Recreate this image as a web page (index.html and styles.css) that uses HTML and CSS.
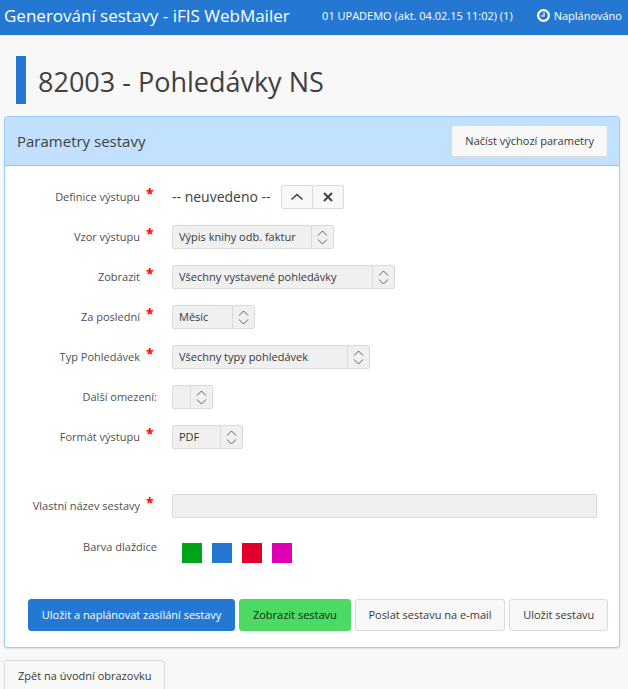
FILE: index.html
```html
<!DOCTYPE html>
<html lang="cs">
  <head>
    <meta charset="UTF-8" />
    <meta name="viewport" content="width=device-width, initial-scale=1.0" />
    <title>Generování sestavy - iFIS WebMailer</title>
    <link rel="stylesheet" href="styles.css">
  </head>
  <body>
    <svg class="icon-defs" aria-hidden="true">
      <symbol id="updown" viewBox="0 0 22 22">
        <path d="M6 9.5 L10.5 5 L15 9.5 M6 13.5 L10.5 18 L15 13.5" fill="none" stroke="currentColor" />
      </symbol>
    </svg>

    <header class="navbar">
      <a href="#" class="brand">Generování sestavy - iFIS WebMailer</a>
      <nav class="nav-links">
        <a href="#">01 UPADEMO (akt. 04.02.15 11:02) (1)</a>
        <a href="#" class="planned">
          <svg class="clock" viewBox="0 0 12 12" aria-hidden="true">
            <circle cx="6" cy="6" r="5" fill="none" stroke="currentColor" stroke-width="2" />
            <path d="M6.5 3 V6.5 H3.5" fill="none" stroke="currentColor" />
          </svg>
          Naplánováno
        </a>
      </nav>
    </header>

    <main>
      <h1 class="page-title">82003 - Pohledávky NS</h1>

      <form class="panel">
        <div class="panel-heading">
          <h2>Parametry sestavy</h2>
          <button type="button" class="btn">Načíst výchozí parametry</button>
        </div>

        <div class="panel-body">
          <div class="row">
            <span class="label required">Definice výstupu</span>
            <div class="field">
              <span class="value">-- neuvedeno --</span>
              <div class="btn-group">
                <button type="button" class="btn-icon" aria-label="Vybrat">
                  <svg viewBox="0 0 14 14"><path d="M1.5 9.5 L7 4.5 L12.5 9.5" fill="none" stroke="currentColor" stroke-width="1.6" /></svg>
                </button>
                <button type="button" class="btn-icon" aria-label="Zrušit">
                  <svg viewBox="0 0 14 14"><path d="M3 3 L11 11 M11 3 L3 11" fill="none" stroke="currentColor" stroke-width="2" /></svg>
                </button>
              </div>
            </div>
          </div>

          <div class="row">
            <label class="label required" for="vzor">Vzor výstupu</label>
            <div class="select select-md">
              <select id="vzor"><option>Výpis knihy odb. faktur</option></select>
              <svg aria-hidden="true"><use href="#updown" /></svg>
            </div>
          </div>

          <div class="row">
            <label class="label required" for="zobrazit">Zobrazit</label>
            <div class="select select-xl">
              <select id="zobrazit"><option>Všechny vystavené pohledávky</option></select>
              <svg aria-hidden="true"><use href="#updown" /></svg>
            </div>
          </div>

          <div class="row">
            <label class="label required" for="obdobi">Za poslední</label>
            <div class="select select-sm">
              <select id="obdobi"><option>Měsíc</option></select>
              <svg aria-hidden="true"><use href="#updown" /></svg>
            </div>
          </div>

          <div class="row">
            <label class="label required" for="typ">Typ Pohledávek</label>
            <div class="select select-lg">
              <select id="typ"><option>Všechny typy pohledávek</option></select>
              <svg aria-hidden="true"><use href="#updown" /></svg>
            </div>
          </div>

          <div class="row">
            <label class="label" for="omezeni">Další omezení:</label>
            <div class="select select-empty">
              <select id="omezeni"><option></option></select>
              <svg aria-hidden="true"><use href="#updown" /></svg>
            </div>
          </div>

          <div class="row">
            <label class="label required" for="format">Formát výstupu</label>
            <div class="select select-xs">
              <select id="format"><option>PDF</option></select>
              <svg aria-hidden="true"><use href="#updown" /></svg>
            </div>
          </div>

          <div class="row row-name">
            <label class="label required" for="nazev">Vlastní název sestavy</label>
            <input type="text" id="nazev" class="text-input">
          </div>

          <div class="row row-color">
            <span class="label">Barva dlaždice</span>
            <div class="swatches">
              <button type="button" class="swatch green" aria-label="Zelená"></button>
              <button type="button" class="swatch blue" aria-label="Modrá"></button>
              <button type="button" class="swatch red" aria-label="Červená"></button>
              <button type="button" class="swatch magenta" aria-label="Purpurová"></button>
            </div>
          </div>
        </div>

        <div class="panel-footer">
          <button type="button" class="btn btn-primary">Uložit a naplánovat zasílání sestavy</button>
          <button type="button" class="btn btn-success">Zobrazit sestavu</button>
          <button type="button" class="btn">Poslat sestavu na e-mail</button>
          <button type="button" class="btn">Uložit sestavu</button>
        </div>
      </form>

      <button type="button" class="btn">Zpět na úvodní obrazovku</button>
    </main>
  </body>
</html>
```
FILE: styles.css
```css
* {
  margin: 0;
  padding: 0;
  box-sizing: border-box;
}

body {
  background-color: #f8f8f8;
  color: #404040;
  font-family: "Segoe UI", "Open Sans", sans-serif;
  font-size: 11px;
  line-height: 16px;
}

button,
input,
select {
  font: inherit;
  color: inherit;
}

.icon-defs {
  display: none;
}

/* top bar */
.navbar {
  display: flex;
  justify-content: space-between;
  align-items: center;
  height: 35px;
  padding: 0 6px 4px 4px;
  background-color: #2578d2;
  white-space: nowrap;
}

.navbar a {
  color: #fff;
  text-decoration: none;
}

.brand {
  font-size: 17px;
  line-height: 24px;
}

.nav-links {
  display: flex;
  gap: 24px;
}

.planned {
  display: flex;
  align-items: center;
  gap: 4px;
}

.clock {
  width: 13px;
  height: 13px;
}

main {
  padding: 21px 8px 0 4px;
}

.page-title {
  margin: 0 0 12px 12px;
  padding: 4px 0 0 12px;
  border-left: 10px solid #2578d2;
  font-size: 27px;
  font-weight: 400;
  line-height: 44px;
}

/* buttons */
.btn {
  height: 32px;
  padding: 0 13px;
  border: 1px solid #dadada;
  border-radius: 3px;
  background-color: #f8f8f8;
  color: #383838;
  white-space: nowrap;
}

.btn-primary {
  border-color: #2578d2;
  background-color: #2578d2;
  color: #fff;
}

.btn-success {
  border-color: #4cd964;
  background-color: #4cd964;
  color: #0f2c14;
}

/* panel */
.panel {
  margin-bottom: 12px;
  border: 1px solid #9bcbff;
  border-radius: 3px;
  background-color: #fff;
  box-shadow: 0 1px 2px rgba(0, 0, 0, 0.1);
}

.panel-heading {
  display: flex;
  justify-content: space-between;
  align-items: center;
  height: 49px;
  padding: 0 11px 0 12px;
  border-bottom: 1px solid #8fc4fc;
  background-color: #c2e0ff;
}

.panel-heading h2 {
  font-size: 15px;
  font-weight: 400;
  line-height: 20px;
}

.panel-body {
  display: grid;
  gap: 16px;
  padding: 19px 22px 36px 0;
}

.row {
  display: grid;
  grid-template-columns: 152px 1fr;
  column-gap: 15px;
  align-items: center;
  min-height: 24px;
}

.row-name {
  margin-top: 29px;
}

.row-color {
  align-items: start;
  margin-top: 5px;
}

.label {
  display: flex;
  justify-content: flex-end;
  color: #505050;
  white-space: nowrap;
}

.required::after {
  content: "*";
  width: 11px;
  padding-left: 6px;
  color: #f00;
  font-size: 14px;
  font-weight: 700;
  line-height: 10px;
}

.field {
  display: flex;
  align-items: center;
  gap: 10px;
}

.value {
  font-size: 14px;
}

.btn-group {
  display: flex;
}

.btn-icon {
  display: flex;
  justify-content: center;
  align-items: center;
  width: 32px;
  height: 24px;
  border: 1px solid #dadada;
  border-radius: 2px;
  background-color: #f8f8f8;
}

.btn-icon + .btn-icon {
  margin-left: -1px;
}

.btn-icon svg {
  width: 14px;
  height: 14px;
}

/* the select and its arrow box share one grid cell */
.select {
  display: grid;
  grid-template-columns: 1fr 23px;
  align-items: center;
  height: 24px;
}

.select select {
  grid-area: 1 / 1 / 2 / 3;
  height: 24px;
  appearance: none;
  padding: 0 24px 0 6px;
  border: 1px solid #dadada;
  border-radius: 2px;
  background-color: #f0f0f0;
  color: #383838;
}

.select svg {
  grid-area: 1 / 2;
  width: 23px;
  height: 22px;
  border-left: 1px solid #dadada;
  color: #606060;
  pointer-events: none;
}

.select-empty {
  width: 41px;
}

.select-xs {
  width: 71px;
}

.select-sm {
  width: 83px;
}

.select-md {
  width: 162px;
}

.select-lg {
  width: 198px;
}

.select-xl {
  width: 223px;
}

.text-input {
  width: 100%;
  height: 24px;
  padding: 0 6px;
  border: 1px solid #dadada;
  border-radius: 2px;
  background-color: #f0f0f0;
}

.swatches {
  display: flex;
  gap: 10px;
  padding: 4px 0 0 10px;
}

.swatch {
  width: 20px;
  height: 20px;
  border: none;
}

.green {
  background-color: #00a31a;
}

.blue {
  background-color: #2578d2;
}

.red {
  background-color: #e0002d;
}

.magenta {
  background-color: #e000b4;
}

.panel-footer {
  display: flex;
  flex-wrap: wrap;
  gap: 4px;
  padding: 0 11px 16px 23px;
}

.panel-footer .btn {
  flex-grow: 1;
  padding: 0 11px;
}
```
